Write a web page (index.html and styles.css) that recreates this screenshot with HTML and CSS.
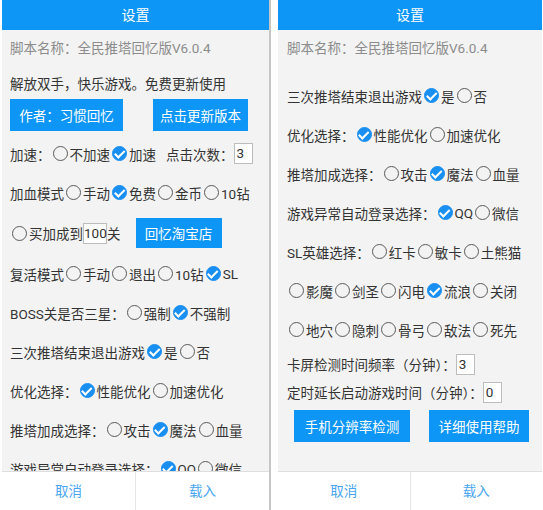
FILE: index.html
```html
<!DOCTYPE html>
<html lang="zh-CN">
<head>
    <meta charset="UTF-8">
    <meta name="viewport" content="width=device-width, initial-scale=1.0">
    <title>设置</title>
    <link rel="stylesheet" href="styles.css">
</head>
<body>
    <div class="phone left">
        <div class="header">设置</div>
        <div class="content">
            <p class="name">脚本名称：全民推塔回忆版V6.0.4</p>
            <p class="motto">解放双手，快乐游戏。免费更新使用</p>
            <div class="btn-row">
                <button class="btn author">作者：习惯回忆</button>
                <button class="btn update">点击更新版本</button>
            </div>
            <div class="row first">加速：<span class="radio"></span>不加速<span class="radio on"></span>加速<span class="gap">点击次数：</span><span class="box">3</span></div>
            <div class="row">加血模式<span class="radio"></span>手动<span class="radio on"></span>免费<span class="radio"></span>金币<span class="radio"></span>10钻</div>
            <div class="row tall"><span class="radio"></span>买加成到<span class="box wide">100</span>关<button class="btn shop">回忆淘宝店</button></div>
            <div class="row">复活模式<span class="radio"></span>手动<span class="radio"></span>退出<span class="radio"></span>10钻<span class="radio on"></span>SL</div>
            <div class="row">BOSS关是否三星：<span class="radio"></span>强制<span class="radio on"></span>不强制</div>
            <div class="row">三次推塔结束退出游戏<span class="radio on"></span>是<span class="radio"></span>否</div>
            <div class="row">优化选择：<span class="radio on"></span>性能优化<span class="radio"></span>加速优化</div>
            <div class="row">推塔加成选择：<span class="radio"></span>攻击<span class="radio on"></span>魔法<span class="radio"></span>血量</div>
            <div class="row">游戏异常自动登录选择：<span class="radio on"></span>QQ<span class="radio"></span>微信</div>
        </div>
        <div class="footer">
            <span>取消</span>
            <span>载入</span>
        </div>
    </div>
    <div class="divider"></div>
    <div class="phone right">
        <div class="header">设置</div>
        <div class="content">
            <p class="name">脚本名称：全民推塔回忆版V6.0.4</p>
            <div class="row spaced">三次推塔结束退出游戏<span class="radio on"></span>是<span class="radio"></span>否</div>
            <div class="row">优化选择：<span class="radio on"></span>性能优化<span class="radio"></span>加速优化</div>
            <div class="row">推塔加成选择：<span class="radio"></span>攻击<span class="radio on"></span>魔法<span class="radio"></span>血量</div>
            <div class="row">游戏异常自动登录选择：<span class="radio on"></span>QQ<span class="radio"></span>微信</div>
            <div class="row">SL英雄选择：<span class="radio"></span>红卡<span class="radio"></span>敏卡<span class="radio"></span>土熊猫</div>
            <div class="row"><span class="radio"></span>影魔<span class="radio"></span>剑圣<span class="radio"></span>闪电<span class="radio on"></span>流浪<span class="radio"></span>关闭</div>
            <div class="row"><span class="radio"></span>地穴<span class="radio"></span>隐刺<span class="radio"></span>骨弓<span class="radio"></span>敌法<span class="radio"></span>死先</div>
            <div class="row short">卡屏检测时间频率（分钟）：<span class="box">3</span></div>
            <div class="row shorter">定时延长启动游戏时间（分钟）：<span class="box">0</span></div>
            <div class="btn-row">
                <button class="btn detect">手机分辨率检测</button>
                <button class="btn help">详细使用帮助</button>
            </div>
        </div>
        <div class="footer">
            <span>取消</span>
            <span>载入</span>
        </div>
    </div>
</body>
</html>
```

FILE: styles.css
```css
body {
    margin: 0;
    padding: 0 0 0 2px;
    height: 510px;
    display: flex;
    overflow: hidden;
    background-color: #ffffff;
    font-family: 'Roboto', 'Noto Sans CJK SC', sans-serif;
    font-size: 13.5px;
    color: #333333;
}
.phone {
    display: flex;
    flex-direction: column;
    height: 510px;
    background-color: #ffffff;
}
.phone.left {
    width: 267px;
}
.phone.right {
    width: 264px;
}
.divider {
    width: 2px;
    margin-right: 7px;
    background-color: #c6c6c6;
}
.header {
    height: 30px;
    line-height: 30px;
    text-align: center;
    background-color: #0d96f5;
    color: #ffffff;
    font-size: 14px;
}
.content {
    flex: 1;
    overflow: hidden;
    padding-left: 8px;
    background-color: #f3f3f3;
}
.right .content {
    padding-left: 9px;
}
.name {
    margin: 0;
    height: 36px;
    line-height: 36px;
    color: #8c8c8c;
}
.motto {
    margin: 8px 0 0;
    height: 20px;
    line-height: 20px;
}
.btn-row {
    display: flex;
    margin-top: 5px;
}
.btn {
    height: 32px;
    padding: 0;
    border: none;
    border-radius: 0;
    background-color: #0d96f5;
    color: #ffffff;
    font-family: inherit;
    font-size: 13.5px;
}
.author {
    width: 113px;
}
.update {
    width: 95px;
    margin-left: 30px;
}
.shop {
    width: 86px;
    height: 30px;
    margin-left: 15px;
}
.detect {
    width: 116px;
    margin-left: 7px;
}
.help {
    width: 100px;
    margin-left: 19px;
}
.row {
    display: flex;
    align-items: center;
    height: 39px;
    white-space: nowrap;
}
.row.first {
    margin-top: 3px;
}
.row.tall {
    height: 42px;
}
.row.spaced {
    margin-top: 10px;
}
.row.short {
    height: 30px;
}
.row.shorter {
    height: 26px;
}
.gap {
    margin-left: 10px;
}
.radio {
    position: relative;
    flex-shrink: 0;
    box-sizing: border-box;
    width: 15px;
    height: 15px;
    margin: 0 2px;
    border: 1.5px solid #5a5a5a;
    border-radius: 50%;
}
.radio.on {
    background-color: #1a8ff2;
    border-color: #1a8ff2;
}
.radio.on::after {
    content: '';
    position: absolute;
    left: 3.5px;
    top: 0.5px;
    width: 3.5px;
    height: 7.5px;
    border: solid #ffffff;
    border-width: 0 2px 2px 0;
    transform: rotate(45deg);
}
.box {
    box-sizing: border-box;
    width: 19px;
    height: 21px;
    line-height: 19px;
    padding-left: 2px;
    border: 1px solid #bdbdbd;
    background-color: #ffffff;
}
.box.wide {
    width: 24px;
    padding-left: 0;
}
.footer {
    display: flex;
    height: 38px;
    border-top: 1px solid #dedede;
    background-color: #ffffff;
}
.footer span {
    flex: 1;
    line-height: 38px;
    text-align: center;
    color: #48a6f0;
}
.footer span + span {
    border-left: 1px solid #e6e6e6;
}
```
